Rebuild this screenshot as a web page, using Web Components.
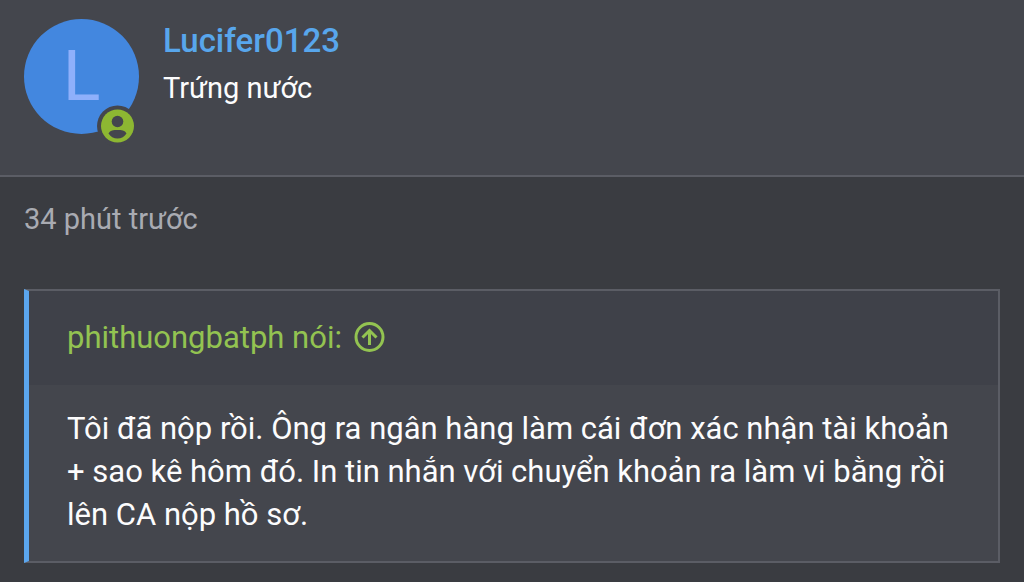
<!DOCTYPE html>
<html lang="vi">
<head>
<meta charset="utf-8">
<meta name="viewport" content="width=device-width, initial-scale=1">
<title>Lucifer0123</title>
<style>
  body {
    margin: 0;
    min-height: 100vh;
    background: #3a3c41;
    color: #fcfcfd;
    font-family: Roboto, "Noto Sans", sans-serif;
    font-size: 31px;
    line-height: 43px;
  }
</style>
</head>
<body>
<forum-post>
  <post-user slot="user" name="Lucifer0123" initial="L">Trứng nước</post-user>
  <time slot="time">34 phút trước</time>
  <quote-block author="phithuongbatph">Tôi đã nộp rồi. Ông ra ngân hàng làm cái đơn xác nhận tài khoản + sao kê hôm đó. In tin nhắn với chuyển khoản ra làm vi bằng rồi lên CA nộp hồ sơ.</quote-block>
</forum-post>

<template id="forum-post">
  <style>
    :host { display: block; }
    header {
      padding: 19px 24px 41px;
      background: #44464d;
      border-bottom: 2px solid #5b5d65;
    }
    main { padding: 21px 24px 18px; }
    .time {
      margin-bottom: 48px;
      color: #a9abb2;
      font-size: 29px;
    }
  </style>
  <article>
    <header><slot name="user"></slot></header>
    <main>
      <div class="time"><slot name="time"></slot></div>
      <slot></slot>
    </main>
  </article>
</template>

<template id="post-user">
  <style>
    :host { display: flex; gap: 24px; }
    .info { display: flex; flex-direction: column; gap: 4px; }
    a {
      color: #58a6ec;
      font-size: 33px;
      font-weight: 500;
      line-height: 44px;
      text-decoration: none;
    }
    .title { font-size: 29px; }
  </style>
  <user-avatar></user-avatar>
  <div class="info">
    <a href="#profile"></a>
    <div class="title"><slot></slot></div>
  </div>
</template>

<template id="user-avatar">
  <style>
    :host { display: block; position: relative; flex: none; }
    .disc {
      display: grid;
      place-items: center;
      width: 115px;
      height: 115px;
      border-radius: 50%;
      background: #4387df;
      color: #8fb0fb;
      font-size: 70px;
      line-height: 115px;
    }
    svg {
      position: absolute;
      right: 0;
      bottom: -13px;
      width: 42px;
      height: 42px;
    }
  </style>
  <div class="disc"></div>
  <svg viewBox="0 0 42 42" role="img" aria-label="Online">
    <circle cx="20.500" cy="21" r="20.500" fill="#44464d"/>
    <circle cx="20.500" cy="21" r="16.500" fill="#8db732"/>
    <circle cx="20.500" cy="16.500" r="5.800" fill="#44464d"/>
    <path d="M11.500 28.500c1.600-3.200 5-3.500 9-3.500s7.400.3 9 3.500c-1.800 3.100-5.200 5-9 5s-7.200-1.900-9-5z" fill="#44464d"/>
  </svg>
</template>

<template id="quote-block">
  <style>
    :host {
      display: block;
      background: #44464d;
      border: 2px solid #5b5d65;
      border-left: 5px solid #5ba6ee;
    }
    .head {
      padding: 25px 38px 26px;
      background: #3f4149;
    }
    a {
      display: inline-flex;
      align-items: center;
      gap: 12px;
      color: #93c351;
      text-decoration: none;
      vertical-align: top;
    }
    svg { width: 32px; height: 32px; }
    blockquote { margin: 0; padding: 22px 38px 25px; }
  </style>
  <div class="head">
    <a href="#quoted"><span></span>
      <svg viewBox="0 0 32 32" fill="none" stroke="currentColor" stroke-width="3" aria-hidden="true">
        <circle cx="15.500" cy="15" r="13.500"/>
        <path d="M15.500 23V9M8.500 15.500l7-7 7 7"/>
      </svg>
    </a>
  </div>
  <blockquote><slot></slot></blockquote>
</template>

<script>
  class TemplateElement extends HTMLElement {
    constructor() {
      super();
      const template = document.getElementById(this.localName);
      this.attachShadow({ mode: "open" }).append(template.content.cloneNode(true));
    }
    find(selector) { return this.shadowRoot.querySelector(selector); }
  }

  class ForumPost extends TemplateElement {}

  class UserAvatar extends TemplateElement {
    static observedAttributes = ["initial"];
    attributeChangedCallback(name, before, value) {
      this.find(".disc").textContent = value;
    }
  }

  class PostUser extends TemplateElement {
    connectedCallback() {
      this.find("a").textContent = this.getAttribute("name");
      this.find("user-avatar").setAttribute("initial", this.getAttribute("initial"));
    }
  }

  class QuoteBlock extends TemplateElement {
    connectedCallback() {
      this.find("span").textContent = this.getAttribute("author") + " nói:";
    }
  }

  customElements.define("user-avatar", UserAvatar);
  customElements.define("post-user", PostUser);
  customElements.define("quote-block", QuoteBlock);
  customElements.define("forum-post", ForumPost);
</script>
</body>
</html>
